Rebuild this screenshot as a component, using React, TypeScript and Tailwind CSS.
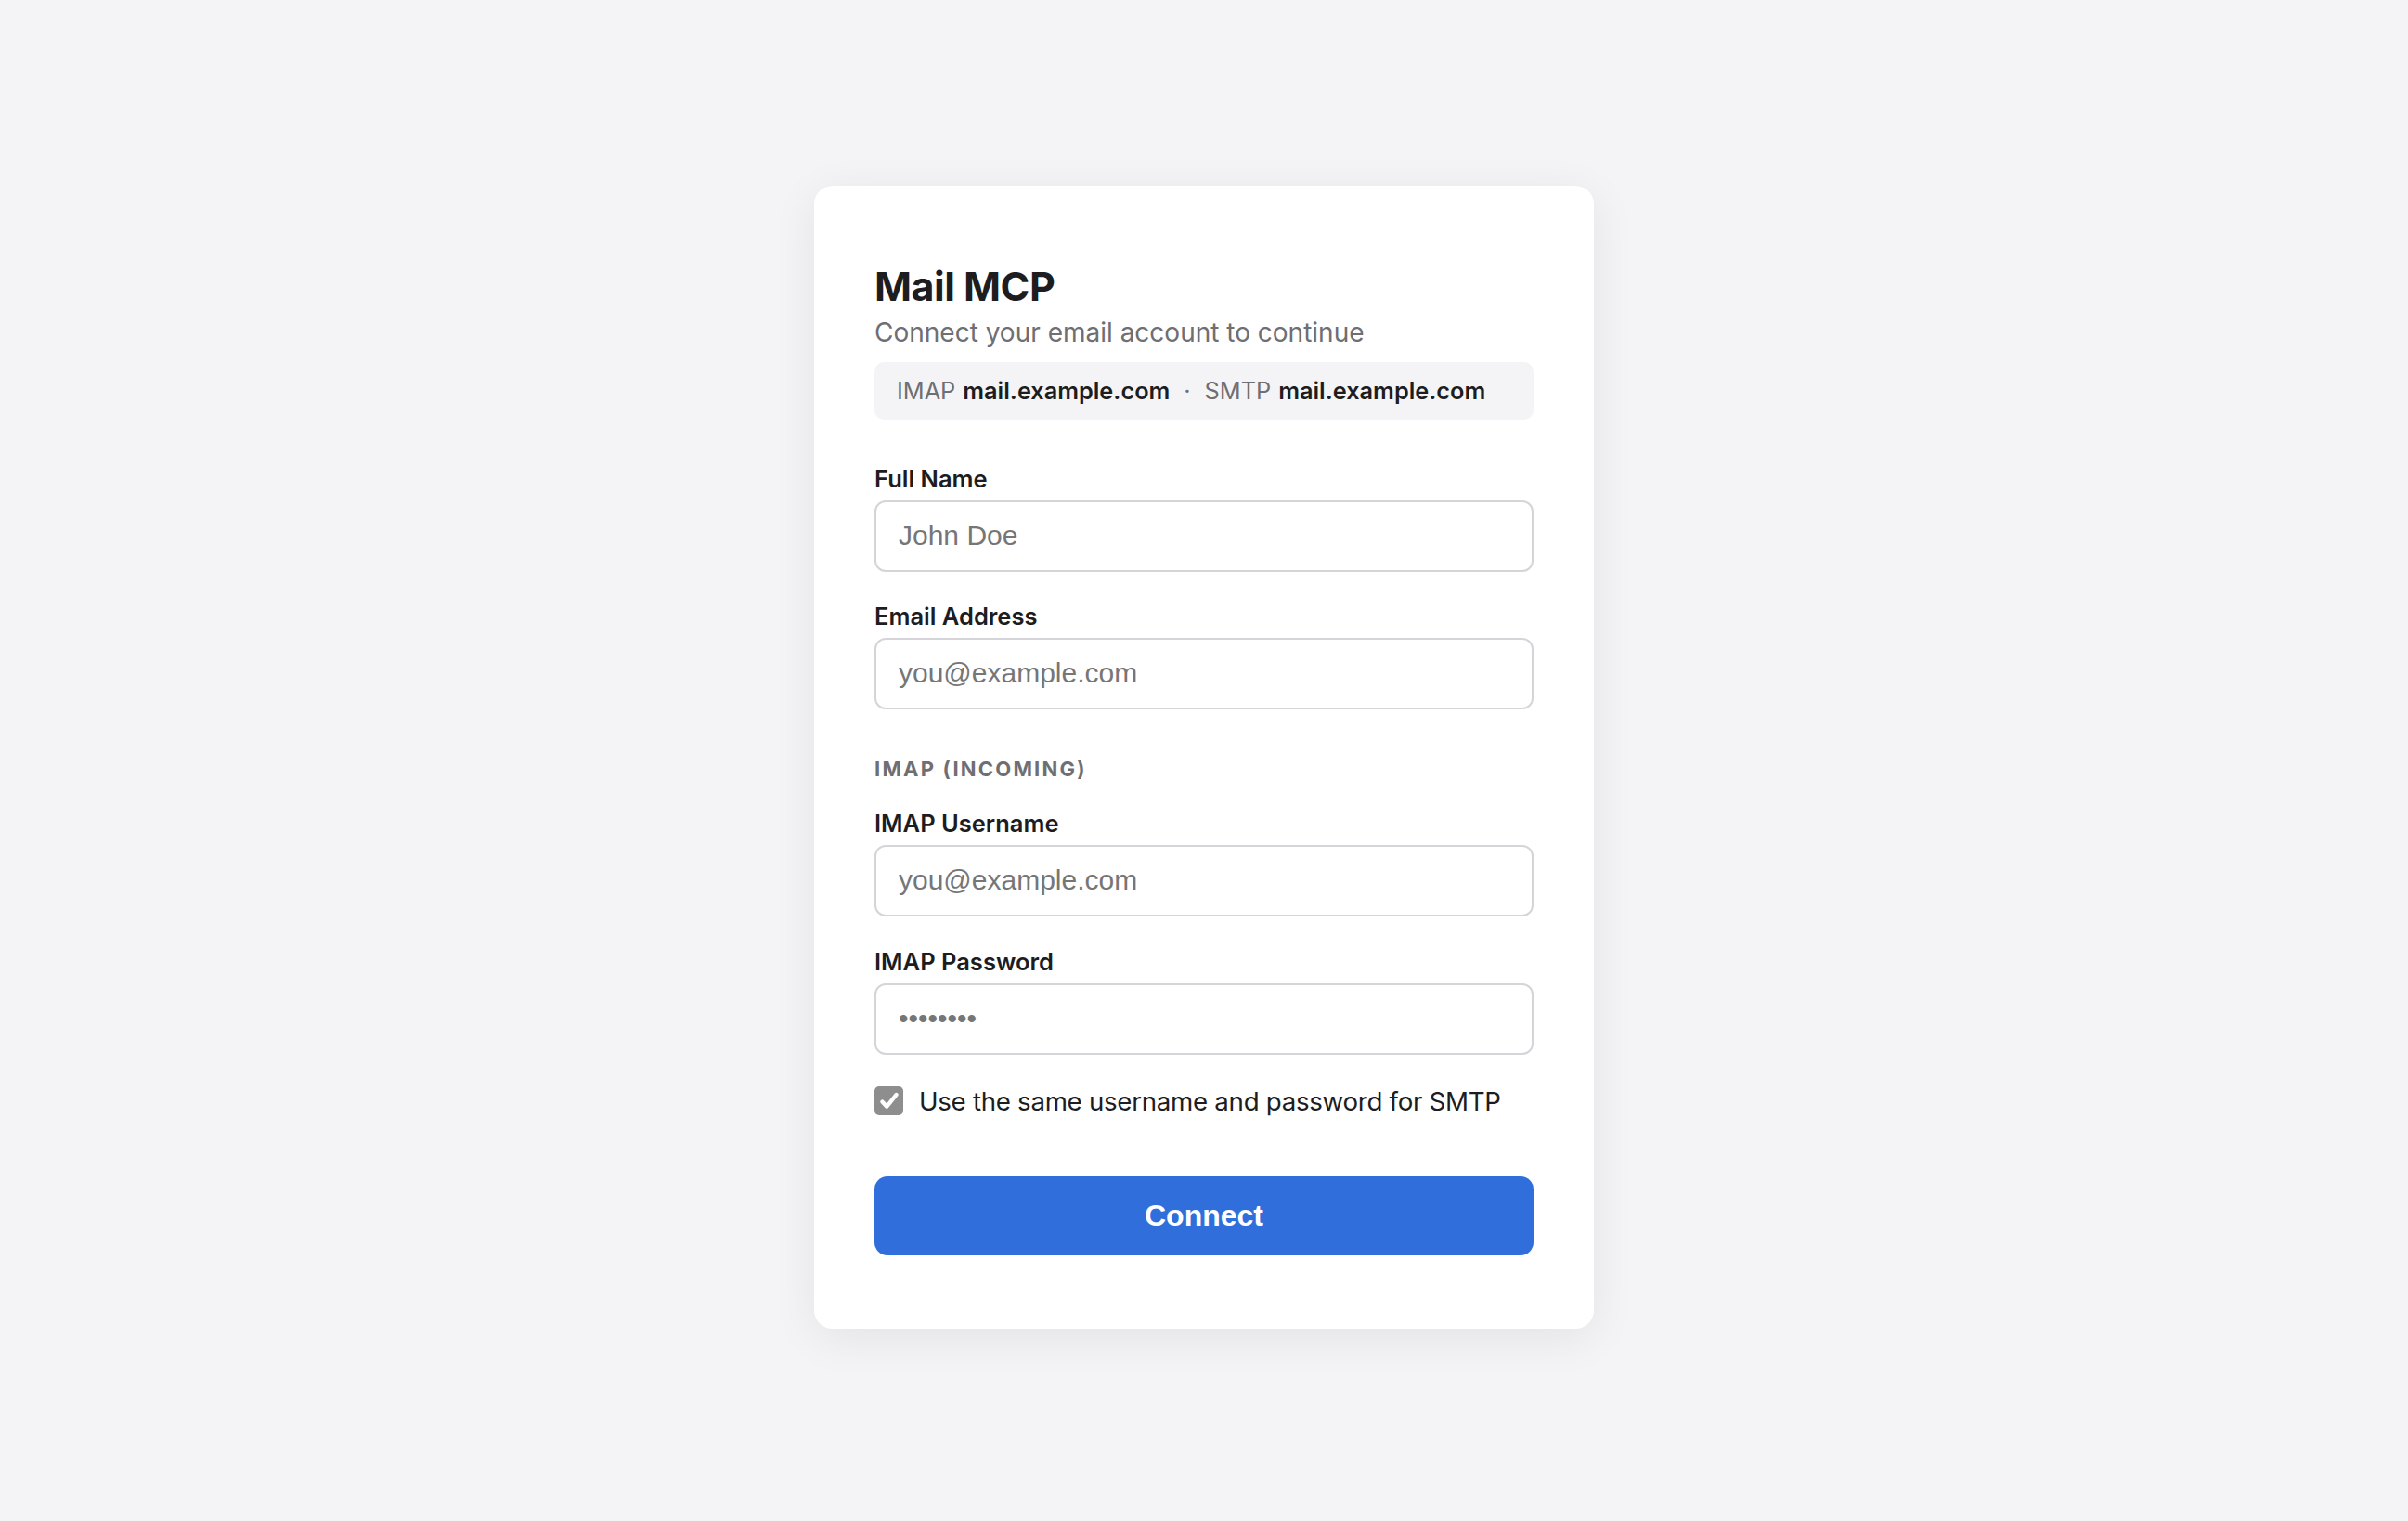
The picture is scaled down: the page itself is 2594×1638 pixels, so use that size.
import { useState } from 'react';

const sans = "font-['Inter','Noto_Sans',sans-serif]";
const arial = "font-['Liberation_Sans','Arial',sans-serif]";

function Field({ label, placeholder, type = 'text' }: { label: string; placeholder: string; type?: string }) {
  return (
    <div className="flex flex-col">
      <label className={`${sans} text-[25.5px] leading-[30px] font-semibold text-[#1d1d1f]`}>{label}</label>
      <input
        type={type}
        placeholder={placeholder}
        className={`${arial} mt-[8px] h-[77px] w-full rounded-[12px] border-2 border-[#d5d5d9] bg-white px-[24px] text-[30px] text-[#1d1d1f] placeholder:text-[#767676] outline-none`}
      />
    </div>
  );
}

export default function App() {
  const [sameCreds, setSameCreds] = useState(true);

  return (
    <div className="flex min-h-screen items-center justify-center bg-[#f4f4f6] pb-[8px]">
      <div className="w-[840px] rounded-[20px] bg-white px-[65px] pt-[82px] pb-[79px] shadow-[0_10px_50px_rgba(0,0,0,0.07)]">
        <h1 className={`${sans} text-[43px] leading-[52px] font-bold tracking-[-0.5px] text-[#1d1d1f]`}>Mail MCP</h1>
        <p className={`${sans} mt-[6px] text-[28px] leading-[36px] text-[#6e6e73]`}>Connect your email account to continue</p>

        <div className={`${sans} mt-[14px] flex h-[62px] items-center rounded-[10px] bg-[#f4f4f6] px-[24px] text-[25.3px] text-[#6e6e73]`}>
          <span>IMAP</span>
          <span className="ml-[8px] font-semibold text-[#1d1d1f]">mail.example.com</span>
          <span className="mx-[15px]">·</span>
          <span>SMTP</span>
          <span className="ml-[8px] font-semibold text-[#1d1d1f]">mail.example.com</span>
        </div>

        <div className="mt-[49px] flex flex-col gap-[33px]">
          <Field label="Full Name" placeholder="John Doe" />
          <Field label="Email Address" placeholder="you@example.com" type="email" />
        </div>

        <div className={`${sans} mt-[51px] text-[22px] leading-[26px] font-bold tracking-[2.2px] text-[#6e6e73]`}>IMAP (INCOMING)</div>

        <div className="mt-[31px] flex flex-col gap-[34px]">
          <Field label="IMAP Username" placeholder="you@example.com" />
          <Field label="IMAP Password" placeholder="••••••••" type="password" />
        </div>

        <label className="mt-[32px] flex cursor-pointer items-center gap-[17px]" onClick={() => setSameCreds(!sameCreds)}>
          <span className={`flex h-[31px] w-[31px] items-center justify-center rounded-[5px] ${sameCreds ? 'bg-[#8e8e8e]' : 'border-2 border-[#8e8e8e] bg-white'}`}>
            {sameCreds && (
              <svg viewBox="0 0 24 24" className="h-[26px] w-[26px]" fill="none" stroke="white" strokeWidth={4} strokeLinecap="round" strokeLinejoin="round">
                <path d="M5 12.5l4.5 4.8L19 5.5" />
              </svg>
            )}
          </span>
          <span className={`${sans} text-[27.7px] leading-[36px] tracking-[-0.3px] text-[#1d1d1f]`}>Use the same username and password for SMTP</span>
        </label>

        <button className={`${arial} mt-[63px] h-[85px] w-full rounded-[14px] bg-[#306fdb] text-[32px] font-bold text-white`}>Connect</button>
      </div>
    </div>
  );
}
